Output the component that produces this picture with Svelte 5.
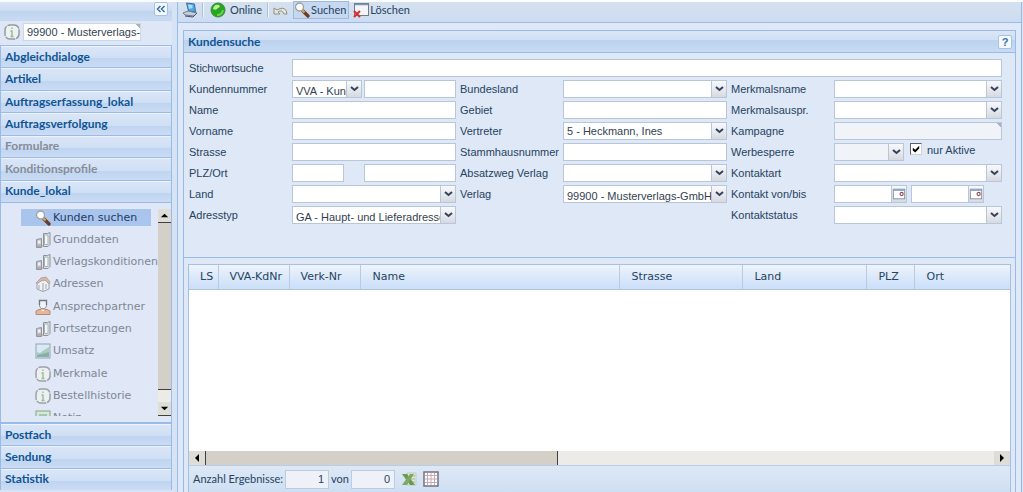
<script lang="ts">
  type NavItem = { label: string; disabled?: boolean };
  type TreeItem = { label: string; icon: string };

  const navTop: NavItem[] = [
    { label: 'Abgleichdialoge' },
    { label: 'Artikel' },
    { label: 'Auftragserfassung_lokal' },
    { label: 'Auftragsverfolgung' },
    { label: 'Formulare', disabled: true },
    { label: 'Konditionsprofile', disabled: true },
    { label: 'Kunde_lokal' }
  ];
  const navBottom: NavItem[] = [{ label: 'Postfach' }, { label: 'Sendung' }, { label: 'Statistik' }];

  const tree: TreeItem[] = [
    { label: 'Kunden suchen', icon: 'search' },
    { label: 'Grunddaten', icon: 'building' },
    { label: 'Verlagskonditionen', icon: 'building' },
    { label: 'Adressen', icon: 'house' },
    { label: 'Ansprechpartner', icon: 'person' },
    { label: 'Fortsetzungen', icon: 'building' },
    { label: 'Umsatz', icon: 'chart' },
    { label: 'Merkmale', icon: 'info' },
    { label: 'Bestellhistorie', icon: 'info' },
    { label: 'Notiz', icon: 'note' }
  ];

  const columns = [
    { label: 'LS', width: 29 },
    { label: 'VVA-KdNr', width: 71 },
    { label: 'Verk-Nr', width: 72 },
    { label: 'Name', width: 259 },
    { label: 'Strasse', width: 123 },
    { label: 'Land', width: 124 },
    { label: 'PLZ', width: 48 },
    { label: 'Ort', width: 95 }
  ];

  let selected = $state('Kunden suchen');
  let onlyActive = $state(true);
</script>

{#snippet icon(name: string)}
  <svg class="icon" viewBox="0 0 16 16" aria-hidden="true">
    {#if name === 'search'}
      <path d="M9 9l5 5" stroke="#6b3f22" stroke-width="3.4" stroke-linecap="round" />
      <path d="M8 8l2.500 2.500" stroke="#d9a066" stroke-width="2.400" />
      <circle cx="5.500" cy="5" r="4" fill="#fbfdff" stroke="#a3a19c" stroke-width="1.300" />
    {:else if name === 'building'}
      <path d="M8.500 1.500h4l2.500-1v12l-2 2h-4.500z" fill="#dfe1e5" stroke="#858a92" />
      <path d="M9.500 3h3.500v9.500H9.500z" fill="#f8f9fa" stroke="#a5aab1" />
      <path d="M1.500 7.500l5-1v9h-5z" fill="#b9bdc4" stroke="#8a8e96" />
      <path d="M3 8.500h2.500v3H3z" fill="#f2f3f4" />
      <path d="M2 14h6" stroke="#b08a83" />
    {:else if name === 'house'}
      <path d="M2 7v6l6 2.500 6-2.500V6l-4-4z" fill="#f4f4f4" stroke="#94999f" />
      <path d="M1 7l5-5 5-1 4 5-1 2-4-4-4 1-4 3z" fill="#e0b09c" stroke="#a79e9c" />
      <path d="M8 7v8M4 9v4M11 8v5" stroke="#b1b9c2" stroke-width="1.500" />
    {:else if name === 'person'}
      <path d="M1 15.500V12l3-1.500h8l3 1.500v3.500z" fill="#eeb08c" stroke="#a9836f" />
      <path d="M4.500 1.500h7V7L10 9.500H6L4.500 7z" fill="#f4f4f6" stroke="#8c8f94" />
      <path d="M4.500 6V1.500h7V6" fill="none" stroke="#666b73" stroke-width="1.300" />
      <path d="M6 10.500l2 2 2-2" fill="#fff" />
    {:else if name === 'chart'}
      <rect x="1" y="1" width="14" height="14" fill="#d9ebf6" stroke="#8b9dab" />
      <path d="M2 14V9l3 1 4-3 5-3v10z" fill="#a5c9be" />
      <path d="M2 14v-2l5-1 7-2v5z" fill="#7fa9a0" />
    {:else if name === 'info'}
      <rect x="1" y="1" width="14" height="14" rx="5" fill="#eef1f4" stroke="#949a9f" stroke-width="1.500" stroke-dasharray="10 1" />
      <path d="M8 3.500v1.500M6.500 7H8v5M6.500 12.500h3" fill="none" stroke="#93bb84" stroke-width="1.400" />
    {:else if name === 'note'}
      <rect x="1" y="1" width="14" height="14" fill="#d5e8d4" stroke="#78a079" />
      <path d="M4 5h8M4 8h6" stroke="#6f9c72" />
    {:else if name === 'laptop'}
      <path d="M4.500 1l8 1 1 8-7-1z" fill="#4aa9e6" stroke="#3f6c9d" />
      <path d="M6 2.500l4.500.500v3l-3.500 1z" fill="#a9dcf8" />
      <path d="M1 11l5-2 9 2-3 3-9-1z" fill="#c4cdd9" stroke="#6e7d92" />
      <path d="M3 14l8 1 4-4" fill="none" stroke="#45556b" />
    {:else if name === 'online'}
      <circle cx="8" cy="8" r="7" fill="#27a51f" stroke="#3c8a3a" />
      <path d="M3 7q1-5 6-4 2 2-1 3-2 3-5 1z" fill="#b4f29a" />
      <path d="M7 13q5 0 6-5" fill="none" stroke="#68d455" stroke-width="2" />
    {:else if name === 'undo'}
      <path d="M1 6v6h6l-2-2q4-3 6 2h3q-1-8-8-5l-2 1z" fill="#e7e6dc" stroke="#928f86" />
    {:else if name === 'delete'}
      <rect x="1.500" y="1.500" width="14" height="12" fill="#f3f5f8" stroke="#727a88" />
      <path d="M2 2.500h13" stroke="#7d94b5" stroke-width="1.500" />
      <path d="M1 9l6 6M7 9l-6 6" stroke="#d92c2c" stroke-width="2" />
    {:else if name === 'excel'}
      <path d="M6 2h9v12H6z" fill="#dfe9da" stroke="#c0cdba" />
      <path d="M9 5h5M9 8h5M9 11h5" stroke="#9fb492" />
      <path d="M1 3h5l8 11H9z" fill="#6a9a50" />
      <path d="M13 3H9L1 14h5z" fill="#7fa866" />
    {:else if name === 'grid'}
      <rect x="1" y="1" width="14" height="14" fill="#fff" stroke="#75707c" stroke-width="1.500" />
      <path d="M4.500 2v12M8 2v12M11.500 2v12M2 4.500h12M2 8h12M2 11.500h12" stroke="#c2a9b4" />
    {:else if name === 'calendar'}
      <rect x="1.500" y="2.500" width="13" height="11" fill="#fff" stroke="#7b8798" />
      <path d="M1 3.500h14" stroke="#8ea5c8" stroke-width="2" />
      <circle cx="11" cy="8" r="1.800" fill="#fff" stroke="#8d4a52" stroke-width="1.300" />
    {/if}
  </svg>
{/snippet}

{#snippet combo(id: string, value: string, low = false, disabled = false)}
  <div class="combo">
    <select {id} class:low {disabled}>
      <option>{value}</option>
    </select>
    <span class="trigger">
      <svg viewBox="0 0 9 6" width="9" height="6" aria-hidden="true">
        <path d="M1 1l3.500 3L8 1" fill="none" stroke="#34415a" stroke-width="2" />
      </svg>
    </span>
  </div>
{/snippet}

{#snippet navButton(item: NavItem)}
  <button class="nav-item" disabled={item.disabled}>{item.label}</button>
{/snippet}

{#snippet arrow(direction: string)}
  <svg class="scroll-arrow {direction}" viewBox="0 0 14 14" aria-hidden="true">
    <path d="M3 9h8L7 5z" fill="#000" />
  </svg>
{/snippet}

<div class="app">
  <aside class="sidebar">
    <div class="sidebar-head">
      <button class="tool" aria-label="Einklappen">
        <svg viewBox="0 0 10 8" width="10" height="8" aria-hidden="true">
          <path d="M4.500 1L1.500 4l3 3M8.500 1l-3 3 3 3" fill="none" stroke="#3b6c9f" stroke-width="1.500" />
        </svg>
      </button>
    </div>
    <div class="client">
      {@render icon('info')}
      <input class="corner" type="text" aria-label="Mandant" value="99900 - Musterverlags-GmbH" />
    </div>
    <nav class="nav-top">
      {#each navTop as item}
        {@render navButton(item)}
      {/each}
    </nav>
    <div class="tree-wrap">
      <ul class="tree">
        {#each tree as item}
          <li>
            <button class="tree-item" class:selected={selected === item.label} onclick={() => (selected = item.label)}>
              {@render icon(item.icon)}
              <span>{item.label}</span>
            </button>
          </li>
        {/each}
      </ul>
      <div class="scroll-y">
        {@render arrow('up')}
        <div class="thumb"></div>
        <div class="rest"></div>
        {@render arrow('down')}
      </div>
    </div>
    <nav class="nav-bottom">
      {#each navBottom as item}
        {@render navButton(item)}
      {/each}
    </nav>
  </aside>

  <main class="main">
    <div class="toolbar">
      <button class="tb" aria-label="Arbeitsplatz">{@render icon('laptop')}</button>
      <span class="sep"></span>
      <button class="tb wide">{@render icon('online')}Online</button>
      <span class="sep"></span>
      <button class="tb" aria-label="Rückgängig">{@render icon('undo')}</button>
      <button class="tb active">{@render icon('search')}Suchen</button>
      <button class="tb">{@render icon('delete')}Löschen</button>
    </div>

    <section class="panel">
      <header class="panel-head">
        <h1>Kundensuche</h1>
        <button class="tool" aria-label="Hilfe">?</button>
      </header>

      <form class="search">
        <div class="row">
          <label for="keyword">Stichwortsuche</label>
          <div class="field"><input id="keyword" type="text" /></div>
        </div>
        <div class="groups">
          <div class="group">
            <div class="row">
              <label for="number-type">Kundennummer</label>
              <div class="field split">
                {@render combo('number-type', 'VVA - Kundennummer', true)}
                <input type="text" aria-label="Kundennummer" />
              </div>
            </div>
            <div class="row">
              <label for="name">Name</label>
              <div class="field"><input id="name" type="text" /></div>
            </div>
            <div class="row">
              <label for="firstname">Vorname</label>
              <div class="field"><input id="firstname" type="text" /></div>
            </div>
            <div class="row">
              <label for="street">Strasse</label>
              <div class="field"><input id="street" type="text" /></div>
            </div>
            <div class="row">
              <label for="zip">PLZ/Ort</label>
              <div class="field split">
                <input id="zip" class="zip" type="text" />
                <input type="text" aria-label="Ort" />
              </div>
            </div>
            <div class="row">
              <label for="country">Land</label>
              <div class="field">{@render combo('country', '')}</div>
            </div>
            <div class="row">
              <label for="address-type">Adresstyp</label>
              <div class="field">{@render combo('address-type', 'GA - Haupt- und Lieferadresse', true)}</div>
            </div>
          </div>

          <div class="group">
            <div class="row">
              <label for="state">Bundesland</label>
              <div class="field">{@render combo('state', '')}</div>
            </div>
            <div class="row">
              <label for="area">Gebiet</label>
              <div class="field"><input id="area" type="text" /></div>
            </div>
            <div class="row">
              <label for="agent">Vertreter</label>
              <div class="field">{@render combo('agent', '5 - Heckmann, Ines')}</div>
            </div>
            <div class="row">
              <label for="parent">Stammhausnummer</label>
              <div class="field"><input id="parent" type="text" /></div>
            </div>
            <div class="row">
              <label for="channel">Absatzweg Verlag</label>
              <div class="field">{@render combo('channel', '')}</div>
            </div>
            <div class="row">
              <label for="publisher">Verlag</label>
              <div class="field">{@render combo('publisher', '99900 - Musterverlags-GmbH', true)}</div>
            </div>
          </div>

          <div class="group">
            <div class="row">
              <label for="attr-name">Merkmalsname</label>
              <div class="field">{@render combo('attr-name', '')}</div>
            </div>
            <div class="row">
              <label for="attr-value">Merkmalsauspr.</label>
              <div class="field">{@render combo('attr-value', '')}</div>
            </div>
            <div class="row">
              <label for="campaign">Kampagne</label>
              <div class="field"><input id="campaign" class="corner" type="text" disabled /></div>
            </div>
            <div class="row">
              <label for="ad-lock">Werbesperre</label>
              <div class="field ad-lock">
                {@render combo('ad-lock', '', false, true)}
                <label class="check">
                  <input type="checkbox" bind:checked={onlyActive} />
                  nur Aktive
                </label>
              </div>
            </div>
            <div class="row">
              <label for="contact-type">Kontaktart</label>
              <div class="field">{@render combo('contact-type', '')}</div>
            </div>
            <div class="row">
              <label for="contact-from">Kontakt von/bis</label>
              <div class="field dates">
                <div class="combo">
                  <input id="contact-from" type="text" />
                  <button type="button" class="trigger" aria-label="Kontakt von">{@render icon('calendar')}</button>
                </div>
                <div class="combo">
                  <input id="contact-to" type="text" aria-label="bis" />
                  <button type="button" class="trigger" aria-label="Kontakt bis">{@render icon('calendar')}</button>
                </div>
              </div>
            </div>
            <div class="row">
              <label for="contact-state">Kontaktstatus</label>
              <div class="field">{@render combo('contact-state', '')}</div>
            </div>
          </div>
        </div>
      </form>

      <div class="results">
        <table>
          <colgroup>
            {#each columns as col}
              <col style="width: {(col.width / 821) * 100}%" />
            {/each}
          </colgroup>
          <thead>
            <tr>
              {#each columns as col}
                <th>{col.label}</th>
              {/each}
            </tr>
          </thead>
          <tbody></tbody>
        </table>
        <div class="scroll-x">
          {@render arrow('left')}
          <div class="thumb"></div>
          <div class="rest"></div>
          {@render arrow('right')}
        </div>
        <footer class="status">
          <label for="count">Anzahl Ergebnisse:</label>
          <input id="count" type="text" value="1" readonly />
          <label for="total">von</label>
          <input id="total" type="text" value="0" readonly />
          <button class="tb" aria-label="Excel-Export">{@render icon('excel')}</button>
          <button class="tb" aria-label="Tabelle">{@render icon('grid')}</button>
        </footer>
      </div>
    </section>
  </main>
</div>

<style>
  :global(body) {
    margin: 0;
    overflow: hidden;
  }
  .app {
    --line: #99bbe8;
    --text: #26435f;
    background: #d6e3f5;
    border-top: 2px solid #fbfcfe;
    box-sizing: border-box;
    color: var(--text);
    display: flex;
    font-family: "Liberation Sans", sans-serif;
    font-size: 11px;
    height: 100vh;
    line-height: 14px;
  }
  .app :is(input, select, button) {
    border: 0;
    border-radius: 0;
    box-sizing: border-box;
    color: inherit;
    font: inherit;
    margin: 0;
    outline: 0;
    padding: 0;
  }
  .app button {
    background: none;
    cursor: pointer;
  }
  .icon {
    flex: none;
    height: 16px;
    width: 16px;
  }
  .tool {
    align-items: center;
    display: flex;
    flex: none;
    height: 14px;
    justify-content: center;
    width: 14px;
  }
  .app .tool {
    background: #f3f9fe;
    border: 1px solid #a5c3e4;
    border-radius: 2px;
    color: #3b6ea5;
    font-weight: 700;
  }

  /* sidebar */
  .sidebar {
    display: flex;
    flex: none;
    flex-direction: column;
    margin-right: 5px;
    width: 172px;
  }
  .sidebar-head {
    align-items: flex-start;
    background: linear-gradient(#dbe6f6, #cadbf2 50%, #bed3ef 50%, #c9dbf3);
    border-bottom: 1px solid #c7d8ee;
    display: flex;
    flex: none;
    height: 18px;
    justify-content: flex-end;
    padding-right: 4px;
  }
  .client {
    align-items: center;
    background: #dde7f6;
    box-sizing: border-box;
    display: flex;
    flex: none;
    gap: 3px;
    height: 24px;
    padding: 0 0 2px 4px;
  }
  .client input {
    border: 1px solid #cdd8e6;
    color: #333f50;
    height: 18px;
    padding-left: 3px;
    width: 118px;
  }
  .app .corner {
    background: linear-gradient(225deg, #a9b2bf 3px, #fff 3px);
  }
  .app .corner:disabled {
    background: linear-gradient(225deg, #a9b2bf 3px, #f0f3f7 3px);
  }
  .nav-top,
  .nav-bottom {
    display: grid;
    flex: none;
    grid-auto-rows: 1fr;
  }
  .nav-top {
    height: 157px;
  }
  .nav-bottom {
    height: 67px;
    margin-bottom: 2px;
  }
  .app .nav-item {
    background: linear-gradient(#dbe6f7, #cfdff4 58%, #bfd4f0 58%, #cbdcf4);
    border: 1px solid var(--line);
    border-bottom-width: 0;
    box-shadow: inset 0 1px #edf3fc;
    color: #0f5596;
    font-family: Lato, "Noto Sans", sans-serif;
    font-size: 12px;
    font-weight: 700;
    padding-left: 4px;
    text-align: left;
  }
  .app .nav-item:disabled {
    color: #858d98;
  }
  .tree-wrap {
    background: #e0e8f7;
    border: 1px solid var(--line);
    box-sizing: border-box;
    display: flex;
    flex: 1;
    min-height: 0;
    overflow: clip;
    overflow-clip-margin: content-box;
    padding: 6px 0;
  }
  .tree {
    display: grid;
    flex: 1;
    font-family: "DejaVu Sans", sans-serif;
    grid-auto-rows: 1fr;
    height: 223px;
    list-style: none;
    margin: 0;
    padding: 0 0 0 20px;
  }
  .app .tree-item {
    align-items: center;
    color: #7d8795;
    display: flex;
    gap: 2px;
    height: 17px;
    padding-left: 14px;
    white-space: nowrap;
    width: 130px;
  }
  .app .tree-item.selected {
    background: #a9c5ee;
    color: #1f3c60;
  }
  .tree-item:not(.selected) .icon {
    opacity: 0.9;
  }
  .scroll-y {
    display: flex;
    flex: none;
    flex-direction: column;
    width: 13px;
  }
  .thumb {
    background: #d4d0c8;
  }
  .rest {
    background: #ecebe8;
    flex: 1;
  }
  .scroll-y .thumb {
    border-bottom: 1px solid #404040;
    height: 80%;
  }
  .scroll-arrow {
    background: #dfddd8;
    flex: none;
    height: 13px;
    width: 13px;
  }
  .scroll-y .scroll-arrow {
    border-bottom: 1px solid #404040;
  }
  .down path {
    transform: rotate(180deg);
    transform-origin: center;
  }
  .left path {
    transform: rotate(-90deg);
    transform-origin: center;
  }
  .right path {
    transform: rotate(90deg);
    transform-origin: center;
  }

  /* main area */
  .main {
    background: #dfe8f6;
    border-left: 1px solid var(--line);
    border-right: 1px solid var(--line);
    display: flex;
    flex: 1;
    flex-direction: column;
    margin-right: 1px;
    min-width: 0;
  }
  .toolbar,
  .status {
    align-items: center;
    box-sizing: border-box;
    display: flex;
    flex: none;
    font-family: Lato, "Liberation Sans", sans-serif;
    font-size: 11px;
  }
  .toolbar {
    background: linear-gradient(#d5e1ef, #d0deee 60%, #cbdcf3);
    border-bottom: 1px solid var(--line);
    gap: 4px;
    height: 21px;
    padding: 0 0 4px 4px;
  }
  .tb {
    align-items: center;
    display: flex;
    gap: 1px;
  }
  .tb.wide {
    gap: 4px;
    padding: 0 1px 0 2px;
  }
  .app .tb.active {
    background: #c5d8ef;
    border: 1px solid #9ebae1;
    height: 18px;
    padding-right: 2px;
  }
  .sep {
    border-left: 1px solid #a9bfda;
    border-right: 1px solid #eef4fb;
    height: 14px;
  }
  .panel {
    border: 1px solid var(--line);
    border-bottom: 0;
    display: flex;
    flex: 1;
    flex-direction: column;
    margin: 7px 5px 0;
    min-height: 0;
  }
  .panel-head {
    align-items: center;
    background: linear-gradient(#dae6f6, #cfdff4 42%, #bcd2ee 42%, #c8dbf3);
    border-bottom: 1px solid var(--line);
    display: flex;
    flex: none;
    height: 21px;
    justify-content: space-between;
    padding: 0 3px 0 4px;
  }
  h1 {
    color: #0f5596;
    font-family: Lato, "Noto Sans", sans-serif;
    font-size: 12px;
    margin: 0;
  }
  .search {
    border-bottom: 1px solid var(--line);
    box-sizing: border-box;
    display: flex;
    flex: none;
    flex-direction: column;
    gap: 3px;
    height: 205px;
    padding: 6px 13px 0 5px;
  }
  .groups {
    display: grid;
    grid-template-columns: repeat(3, 1fr);
  }
  .group {
    display: flex;
    flex-direction: column;
    gap: 3px;
    min-width: 0;
    padding-right: 4px;
  }
  .group:last-child {
    padding-right: 0;
  }
  .row {
    align-items: center;
    display: flex;
    height: 18px;
  }
  .row > label {
    flex: none;
    width: 103px;
  }
  .field {
    display: flex;
    flex: 1;
    height: 18px;
    min-width: 0;
  }
  .field input[type="text"],
  .combo select {
    background: #fff;
    border: 1px solid #b8c6d9;
    flex: 1;
    height: 18px;
    min-width: 0;
    width: 100%;
  }
  .combo {
    display: flex;
    flex: 1;
    min-width: 0;
  }
  .combo select {
    appearance: none;
    border-right: 0;
    color: #333f50;
    overflow: hidden;
    padding-left: 3px;
    text-overflow: clip;
  }
  .combo select.low {
    padding-top: 3px;
  }
  .combo select:disabled,
  .field input:disabled {
    background: #f0f3f7;
    opacity: 1;
  }
  .combo .trigger {
    align-items: center;
    background: linear-gradient(#f8f9fb, #d6dae0);
    border: 1px solid #b8c6d9;
    box-sizing: border-box;
    display: flex;
    flex: none;
    height: 18px;
    justify-content: center;
    width: 16px;
  }
  .combo span.trigger {
    pointer-events: none;
  }
  .dates .trigger .icon {
    height: 14px;
    width: 14px;
  }
  .split {
    justify-content: space-between;
  }
  .split .combo {
    flex: 0 0 70px;
  }
  .split > input[type="text"] {
    flex: 0 0 92px;
  }
  .split > input.zip[type="text"] {
    flex: 0 0 52px;
  }
  .ad-lock {
    gap: 6px;
  }
  .ad-lock .combo {
    flex: 0 0 70px;
  }
  .check {
    display: flex;
    gap: 5px;
  }
  .app .check input {
    appearance: none;
    background: #fff;
    border: 1px solid #d4d0c8;
    border-left-color: #5c5f66;
    border-top-color: #5c5f66;
    height: 12px;
    width: 12px;
  }
  .check input:checked::after {
    background: #000;
    clip-path: polygon(10% 35%, 40% 60%, 90% 10%, 90% 45%, 40% 95%, 10% 70%);
    content: "";
    display: block;
    height: 8px;
    margin: 1px;
    width: 8px;
  }
  .dates {
    gap: 4px;
  }
  .dates .combo {
    flex: 0 0 73px;
  }
  .dates input[type="text"] {
    border-right: 0;
  }

  /* result grid */
  .results {
    background: #fff;
    border: 1px solid #a9bfdf;
    border-bottom: 0;
    display: flex;
    flex: 1;
    flex-direction: column;
    margin: 6px 4px 0;
    min-height: 0;
  }
  table {
    border-collapse: collapse;
    font-family: "DejaVu Sans", sans-serif;
    table-layout: fixed;
    width: 100%;
  }
  th {
    background: linear-gradient(#eef4fc, #dbe8fa 50%, #cbdffa);
    border-bottom: 1px solid #b3c3da;
    border-right: 1px solid #b9cbe3;
    box-sizing: border-box;
    font-weight: 400;
    height: 24px;
    padding: 1px 0 0 11px;
    text-align: left;
    white-space: nowrap;
  }
  th:last-child {
    border-right: 0;
  }
  .scroll-x {
    display: flex;
    flex: none;
    height: 14px;
    margin-top: auto;
  }
  .scroll-x .scroll-arrow {
    height: 14px;
    width: 16px;
  }
  .scroll-x .thumb {
    border-left: 1px solid #404040;
    border-right: 1px solid #404040;
    box-sizing: border-box;
    width: 43%;
  }
  .status {
    background: linear-gradient(#dde8f6, #cfdff3);
    border-top: 1px solid #b9cde8;
    gap: 2px;
    height: 27px;
    padding-left: 4px;
  }
  .status input {
    background: #eef2f8;
    border: 1px solid #bccbe0;
    font-family: "Liberation Sans", sans-serif;
    height: 19px;
    padding-right: 4px;
    text-align: right;
    width: 44px;
  }
  .status .tb {
    margin-left: 4px;
  }
</style>
